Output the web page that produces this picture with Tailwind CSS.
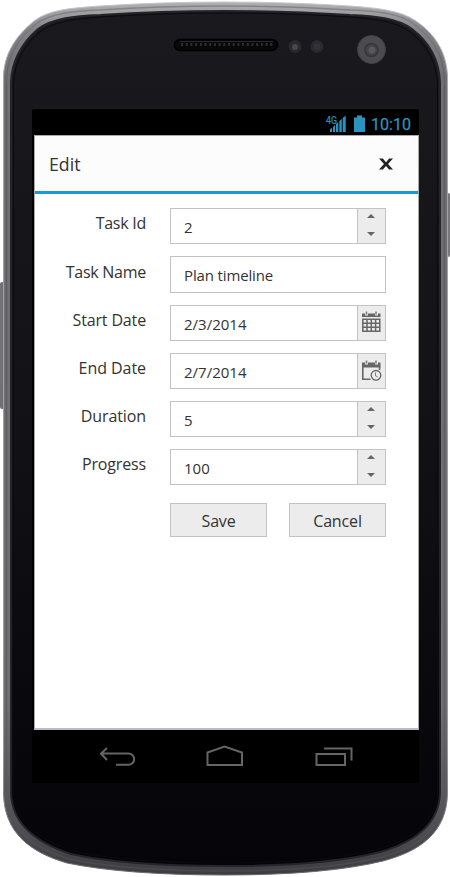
<!DOCTYPE html>
<html lang="en">
<head>
<meta charset="utf-8">
<title>Edit</title>
<script src="https://cdn.jsdelivr.net/npm/@tailwindcss/browser@4"></script>
</head>
<body class="bg-white">
<div class="relative isolate w-[450px] h-[877px] overflow-hidden pl-8 pt-[109px] font-['Open_Sans','Noto_Sans',sans-serif] text-[#333]">
  <!-- Handset body -->
  <svg class="absolute inset-0 -z-10" width="450" height="877" viewBox="0 0 450 877" fill="none">
    <defs>
      <linearGradient id="rim" x1="0" y1="0" x2="0" y2="877" gradientUnits="userSpaceOnUse"><stop offset="0" stop-color="#b4b4b7"/><stop offset=".035" stop-color="#838387"/><stop offset=".09" stop-color="#6f6f74"/><stop offset=".8" stop-color="#6f6f74"/><stop offset=".92" stop-color="#55555a"/><stop offset="1" stop-color="#3b3b40"/></linearGradient>
      <linearGradient id="edge" x1="0" y1="0" x2="0" y2="877" gradientUnits="userSpaceOnUse"><stop offset="0" stop-color="#c8c8ca"/><stop offset=".1" stop-color="#a6a6aa"/><stop offset=".85" stop-color="#9a9a9e"/><stop offset="1" stop-color="#66666a"/></linearGradient>
      <linearGradient id="bevel" x1="0" y1="0" x2="0" y2="877" gradientUnits="userSpaceOnUse"><stop offset="0" stop-color="#88888c"/><stop offset=".1" stop-color="#5c5c61"/><stop offset=".85" stop-color="#5c5c61"/><stop offset="1" stop-color="#48484d"/></linearGradient>
      <linearGradient id="face" x1="0" y1="0" x2="0" y2="1"><stop offset="0" stop-color="#1a191e"/><stop offset=".45" stop-color="#131217"/><stop offset=".85" stop-color="#08070c"/><stop offset="1" stop-color="#050409"/></linearGradient>
    </defs>
    <rect x="0" y="282" width="6" height="127" rx="2" fill="#707075"/>
    <rect x="444" y="193" width="6" height="64" rx="2" fill="#77777c"/>
    <path d="M3.500 76C4.500 52 17 35 34 21C50 9 73 8 100 6Q160 2 225 2Q290 2 350 6C377 8 400 10 416 21C435 34 446.500 52 447.500 76V794C446.500 832 421 851 383 861Q325 875 225 875Q125 875 67 863C29 852 4.500 832 3.500 794Z" fill="url(#rim)" stroke="url(#edge)" stroke-width="1"/>
    <path d="M6.500 78C8 54 19 38 36 24C51 13 74 11 100 10Q160 6 225 6Q290 6 350 10C376 11 399 13 414 24C432 38 443 54 444.500 78V793C443 829 418 847 382 857Q325 871 225 871Q125 871 69 859C33 848 8 829 6.500 793Z" stroke="url(#bevel)" stroke-width="1.500"/>
    <path d="M11 82C12 58 23 42 38 29C53 18 75 16 100 15Q160 11 225 11Q290 11 350 15C375 16 397 18 412 29C429 42 439 58 440 82V793C439 824 415 842 380 852Q325 866 225 866Q125 866 71 854C37 843 12 824 11 793Z" fill="url(#face)" stroke="#252429" stroke-width="2"/>
    <path d="M13.500 84C15 60 25 44 40 32C54 21 76 19 100 17Q160 13 225 13Q290 13 350 17C374 19 395 21 410 32C426 44 436 60 437.500 84V793C436 820 413 839 379 849Q325 863 225 863Q125 863 73 851C40 840 15 820 13.500 793Z" stroke="#0b0b0e" stroke-width="1"/>
    <!-- Speaker -->
    <rect x="174.500" y="39.500" width="103" height="11" rx="5.500" fill="#08080b" stroke="#000" stroke-width="1.500"/>
    <path d="M181 44.500H274" stroke="#2d2c32" stroke-width="3" stroke-dasharray="2 2.700"/>
    <path d="M180 41.500H273" stroke="#29282d"/>
    <!-- Sensors and camera -->
    <circle cx="295" cy="46.500" r="6.500" fill="#29282d"/><circle cx="295" cy="47" r="3" fill="#48484d"/>
    <circle cx="317" cy="46.500" r="6.500" fill="#2a292e"/><circle cx="317" cy="46.500" r="3.500" fill="#333238"/>
    <circle cx="371.500" cy="49.500" r="14" fill="#4c4c50" stroke="#414145"/><circle cx="371.500" cy="50" r="6.500" fill="#444448" stroke="#36363a" stroke-width="1.500"/><circle cx="372" cy="50" r="3.500" fill="#59595e"/>
  </svg>

  <div class="w-[387px] h-[674px] bg-black rounded-[2px] flex flex-col">
    <div class="h-[26px] shrink-0 flex justify-end">
      <svg width="104" height="26" viewBox="315 109 104 26" fill="#2b93bf">
        <text x="326" y="123.500" font-family="Roboto, sans-serif" font-size="10" stroke="#2b93bf" stroke-width=".2" textLength="11" lengthAdjust="spacingAndGlyphs">4G</text>
        <path d="M330 132v-3l2-1v4zM333 132v-5l2-2v7zM336 132v-8l2.300-2v10zM339.300 132v-11l2.500-2v13zM342.700 132v-14l3-2.500v16.500z"/>
        <path d="M354 117.500h3v-2h5v2h3v14.500h-11z"/>
        <text x="371" y="130.300" font-family="Roboto, sans-serif" font-size="16" stroke="#2b93bf" stroke-width=".25" textLength="40" lengthAdjust="spacingAndGlyphs">10:10</text>
      </svg>
    </div>

    <main class="ml-[2px] w-[385px] h-[595px] shrink-0 bg-white border border-[#aaa] border-b-2 border-b-[#b8bcc4] flex flex-col">
      <header class="h-[58px] shrink-0 bg-[#fcfcfc] border-b-3 border-[#179bd7] flex items-center justify-between pl-[14px] pr-[25px]">
        <h1 class="text-[18px] leading-6 pt-[3px]"><svg class="block overflow-visible" width="33" height="24"><text x="0" y="18" fill="#333" textLength="31.500" lengthAdjust="spacingAndGlyphs">Edit</text></svg></h1>
        <button aria-label="Close" class="pt-px"><svg width="14" height="12" viewBox="0 0 14 12"><path d="M0 .5h3.800L7 4.200 10.200.5H14L9 6l5 5.500h-3.900L7 7.900l-3.100 3.600H0L5 6z" fill="#222"/></svg></button>
      </header>

      <form class="pl-5 pr-[32px] pt-[14px]">
        <div class="flex flex-col gap-3">
          <label class="flex h-9 text-[16px]">
            <span class="w-[91px] mr-6 pt-[3px] leading-6 text-right tracking-[-.26px] whitespace-nowrap">Task Id</span>
            <span class="flex flex-1 border border-[#c3c3c3]"><span class="flex-1 pl-[13px] pt-px leading-[34px] text-[15px]">2</span><span class="w-7 bg-[#ececec] border-l border-[#c3c3c3] flex flex-col items-center pt-[5px] gap-[14px] pr-[2px]"><svg width="8" height="4"><path d="M0 4 4 0l4 4z" fill="#666"/></svg><svg width="8" height="4"><path d="M0 0h8L4 4z" fill="#666"/></svg></span></span>
          </label>
          <label class="flex h-[37px] text-[16px]">
            <span class="w-[91px] mr-6 pt-[4px] leading-6 text-right tracking-[-.26px] whitespace-nowrap">Task Name</span>
            <span class="flex flex-1 border border-[#c3c3c3] pl-[13px] pt-px leading-[34px] text-[15px] tracking-[-.14px]">Plan timeline</span>
          </label>
          <label class="flex h-9 text-[16px]">
            <span class="w-[91px] mr-6 pt-[3px] leading-6 text-right tracking-[-.15px] whitespace-nowrap">Start Date</span>
            <span class="flex flex-1 border border-[#c3c3c3]"><span class="flex-1 pl-[13px] pt-px leading-[34px] text-[15px]">2/3/2014</span><span class="w-7 bg-[#ececec] border-l border-[#c3c3c3] flex items-start pl-1 pt-[5px]"><svg width="19" height="22" viewBox="0 0 19 22"><path d="M0 2.500h3v2h3v-2h7v2h3v-2h2.500V6H0z" fill="#666"/><path d="M4.500 .5v3M14 .5v3" stroke="#777" stroke-width="1.500"/><path d="M.8 8.300h17v11.900H.8zM5 8V20M9.300 8V20M13.600 8V20M.8 12.200h17M.8 16.200h17" fill="none" stroke="#666" stroke-width="1.500"/></svg></span></span>
          </label>
          <label class="flex h-9 text-[16px]">
            <span class="w-[91px] mr-6 pt-[3px] leading-6 text-right tracking-[-.05px] whitespace-nowrap">End Date</span>
            <span class="flex flex-1 border border-[#c3c3c3]"><span class="flex-1 pl-[13px] pt-px leading-[34px] text-[15px]">2/7/2014</span><span class="w-7 bg-[#ececec] border-l border-[#c3c3c3] flex items-start pl-1 pt-[6px]"><svg width="20" height="21" viewBox="0 0 20 21"><path d="M0 2.500h3v2h3v-2h7v2h3v-2h2.500v5H0z" fill="#666"/><path d="M4.500 .5v3M14 .5v3" stroke="#777" stroke-width="1.500"/><path d="M.8 6v13.200H8.500M17.500 6v4" fill="none" stroke="#666" stroke-width="1.600"/><circle cx="14" cy="15.300" r="4.800" fill="#ececec" stroke="#666" stroke-width="1.300"/><path d="M13.500 12.500v3.300l2 1" fill="none" stroke="#777" stroke-width="1"/></svg></span></span>
          </label>
          <label class="flex h-9 text-[16px]">
            <span class="w-[91px] mr-6 pt-[3px] leading-6 text-right tracking-[-.1px] whitespace-nowrap">Duration</span>
            <span class="flex flex-1 border border-[#c3c3c3]"><span class="flex-1 pl-[13px] pt-px leading-[34px] text-[15px]">5</span><span class="w-7 bg-[#ececec] border-l border-[#c3c3c3] flex flex-col items-center pt-[5px] gap-[14px] pr-[2px]"><svg width="8" height="4"><path d="M0 4 4 0l4 4z" fill="#666"/></svg><svg width="8" height="4"><path d="M0 0h8L4 4z" fill="#666"/></svg></span></span>
          </label>
          <label class="flex h-9 text-[16px]">
            <span class="w-[91px] mr-6 pt-[3px] leading-6 text-right tracking-[-.15px] whitespace-nowrap">Progress</span>
            <span class="flex flex-1 border border-[#c3c3c3]"><span class="flex-1 pl-[13px] pt-px leading-[34px] text-[15px]">100</span><span class="w-7 bg-[#ececec] border-l border-[#c3c3c3] flex flex-col items-center pt-[5px] gap-[14px] pr-[2px]"><svg width="8" height="4"><path d="M0 4 4 0l4 4z" fill="#666"/></svg><svg width="8" height="4"><path d="M0 0h8L4 4z" fill="#666"/></svg></span></span>
          </label>
        </div>
        <div class="flex justify-between mt-[18px] pl-[115px] text-[16px]">
          <button type="button" class="w-[97px] h-[34px] bg-[#ececec] border border-[#c3c3c3] tracking-[-.2px] pt-px">Save</button>
          <button type="button" class="w-[97px] h-[34px] bg-[#ececec] border border-[#c3c3c3] tracking-[-.15px] pt-px">Cancel</button>
        </div>
      </form>
    </main>

    <nav class="flex-1 flex" aria-label="System navigation">
      <svg width="387" height="53" viewBox="32 730 387 53" fill="none" stroke="#656565" stroke-width="2">
        <path d="M101 753.500h27.500a5.600 5.600 0 0 1 0 11.300H116M107 748l-6 5.500 6 6.500"/>
        <path d="M207.500 765v-12.500l17-6 17.500 6V765z"/>
        <path d="M316.500 754h28.500v11H316.500zM324 748.500h27.500V760.500"/>
      </svg>
    </nav>
  </div>
</div>
</body>
</html>
